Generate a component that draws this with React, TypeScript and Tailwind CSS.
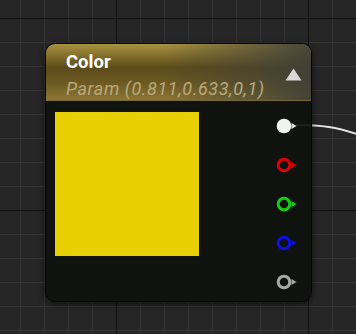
const pins = [
  { ring: '#e6e6e6', fill: '#f2f2f2', solid: true },
  { ring: '#e00000', fill: '#111', solid: false },
  { ring: '#10d010', fill: '#111', solid: false },
  { ring: '#0a10e0', fill: '#111', solid: false },
  { ring: '#a8a8a8', fill: '#111', solid: false },
];

function Pin({ ring, fill, solid }: { ring: string; fill: string; solid: boolean }) {
  return (
    <svg width="22" height="16" viewBox="0 0 22 16">
      <path d="M15.5 5 L20.5 8 L15.5 11 Z" fill={ring} />
      {solid ? (
        <circle cx="8" cy="8" r="7.3" fill={fill} />
      ) : (
        <circle cx="8" cy="8" r="5.8" fill={fill} stroke={ring} strokeWidth="3" />
      )}
    </svg>
  );
}

export default function App() {
  return (
    <div className="relative w-[356px] h-[334px] overflow-hidden bg-[#262626] bg-[linear-gradient(to_right,#121212_1px,transparent_1px),linear-gradient(to_bottom,#121212_1px,transparent_1px),linear-gradient(to_right,#353535_1px,transparent_1px),linear-gradient(to_bottom,#353535_1px,transparent_1px)] bg-[size:192px_192px,192px_192px,24px_24px,24px_24px] bg-[position:116px_18px,116px_18px,20px_18px,20px_18px] font-['Roboto','Liberation_Sans',sans-serif]">
      <svg className="absolute left-0 top-0" width="356" height="334">
        <path d="M296 125 C 322 125, 336 127, 360 135" fill="none" stroke="#e4e4e4" strokeWidth="2" />
      </svg>

      <div className="absolute left-[45px] top-[43px] w-[267px] h-[259px] rounded-[10px] border border-[#050505] bg-[rgba(15,17,15,0.93)] shadow-[0_2px_6px_rgba(0,0,0,0.6)] overflow-hidden flex flex-col">
        <div className="h-[57px] shrink-0 flex items-center justify-between pl-[20px] pr-[9px] border-b border-[#7a6a2c] bg-[linear-gradient(to_right,transparent_45%,rgba(62,62,56,0.9)_100%),linear-gradient(to_bottom,#a8923f_0%,#5c4c1b_42%,#6c5a22_70%,#8c7634_100%)]">
          <div className="flex flex-col mt-[8px]">
            <span className="text-[18.5px] leading-[22px] font-bold text-white">Color</span>
            <span className="text-[18px] leading-[26px] italic tracking-[0.6px] text-[#b8aa7c] mt-[3px]">Param (0.811,0.633,0,1)</span>
          </div>
          <svg width="17" height="13" viewBox="0 0 17 13" className="mt-[4px]">
            <path d="M8.5 0.5 L16.5 12.5 L0.5 12.5 Z" fill="#d8d8d8" />
          </svg>
        </div>

        <div className="flex justify-between pl-[9px] pr-[13px] pt-[11px]">
          <div className="w-[144px] h-[144px] bg-[#e8d000]" />
          <div className="flex flex-col -mt-[6px]">
            {pins.map((p, i) => (
              <div key={i} className="h-[39px] flex items-center">
                <Pin {...p} />
              </div>
            ))}
          </div>
        </div>
      </div>
    </div>
  );
}
